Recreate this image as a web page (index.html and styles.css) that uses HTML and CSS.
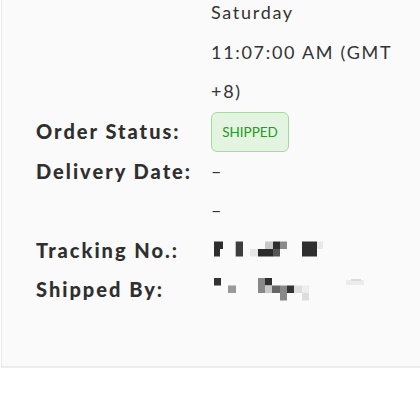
FILE: index.html
```html
<!DOCTYPE html>
<html>
<head>
<meta charset="utf-8">
<link rel="stylesheet" href="styles.css">
</head>
<body>
<div class="panel">
  <div class="row">
    <div class="label"></div>
    <div class="value">Saturday<br>11:07:00 AM (GMT<br>+8)</div>
  </div>
  <div class="row row-center">
    <div class="label">Order Status:</div>
    <div class="value"><span class="badge">SHIPPED</span></div>
  </div>
  <div class="row">
    <div class="label">Delivery Date:</div>
    <div class="value">–</div>
  </div>
  <div class="row">
    <div class="label"></div>
    <div class="value">–</div>
  </div>
  <div class="row">
    <div class="label">Tracking No.:</div>
    <div class="value">
      <svg class="redact" width="160" height="39" viewBox="0 0 160 39">
        <rect x="3" y="10.5" width="9" height="7.5" fill="#2e2e2e"/>
        <rect x="3" y="18" width="6" height="7.5" fill="#2e2e2e"/>
        <rect x="24.7" y="10.5" width="7.3" height="15" fill="#3d3d3d"/>
        <rect x="54" y="10.5" width="8" height="7.5" fill="#c8c8c8"/>
        <rect x="62" y="10.5" width="7" height="7.5" fill="#2e2e2e"/>
        <rect x="69" y="10.5" width="7" height="7.5" fill="#8a8a8a"/>
        <rect x="39" y="18" width="8" height="7.5" fill="#e6e6e6"/>
        <rect x="47" y="18" width="15" height="7.5" fill="#2b2b2b"/>
        <rect x="62" y="18" width="7" height="7.5" fill="#555555"/>
        <rect x="91" y="10.5" width="15" height="15" fill="#2e2e2e"/>
        <rect x="106" y="10.5" width="6" height="7.5" fill="#e8e8e8"/>
      </svg>
    </div>
  </div>
  <div class="row">
    <div class="label">Shipped By:</div>
    <div class="value">
      <svg class="redact" width="160" height="39" viewBox="0 0 160 39">
        <rect x="3" y="8" width="7" height="7.5" fill="#333333"/>
        <rect x="17" y="15.5" width="8" height="7.5" fill="#9a9a9a"/>
        <rect x="47" y="8" width="7" height="15" fill="#888888"/>
        <rect x="54" y="8" width="7" height="7.5" fill="#2e2e2e"/>
        <rect x="54" y="15.5" width="7" height="7.5" fill="#c8c8c8"/>
        <rect x="61" y="15.5" width="8" height="7.5" fill="#666666"/>
        <rect x="69" y="15.5" width="7" height="15" fill="#888888"/>
        <rect x="76" y="15.5" width="7" height="7.5" fill="#333333"/>
        <rect x="83" y="15.5" width="8" height="7.5" fill="#dddddd"/>
        <rect x="91" y="15.5" width="7" height="7.5" fill="#eeeeee"/>
        <rect x="91" y="23" width="7" height="7.5" fill="#dddddd"/>
        <rect x="135" y="10" width="18" height="5" fill="#ececec"/>
        <rect x="140" y="9" width="10" height="2" fill="#dcdcdc"/>
      </svg>
    </div>
  </div>
</div>
</body>
</html>
```

FILE: styles.css
```css
html, body {
  margin: 0;
  padding: 0;
  background: #ffffff;
}

body {
  font-family: Lato, "Open Sans", sans-serif;
  color: #333333;
  overflow: hidden;
}

.panel {
  margin-top: -7px;
  margin-left: 1px;
  background: #fafafa;
  border-left: 1px solid #e8e8e8;
  border-bottom: 2px solid #ececec;
  padding: 0 0 56px 34px;
}

.row {
  display: flex;
  align-items: flex-start;
}

.row-center {
  align-items: center;
}

.label {
  width: 175px;
  flex: none;
  font-weight: 900;
  font-size: 20px;
  letter-spacing: 2px;
  line-height: 39.5px;
  color: #2f2f2f;
}

.value {
  font-size: 18px;
  letter-spacing: 1.7px;
  line-height: 39.5px;
  color: #333333;
}

.badge {
  display: inline-block;
  box-sizing: border-box;
  width: 78px;
  height: 40px;
  line-height: 38px;
  text-align: center;
  font-size: 13.5px;
  font-weight: 400;
  letter-spacing: 0;
  color: #2a962a;
  background: #e3f4e0;
  border: 1px solid #a9d8a2;
  border-radius: 6px;
  vertical-align: top;
}

.redact {
  display: block;
}
```
